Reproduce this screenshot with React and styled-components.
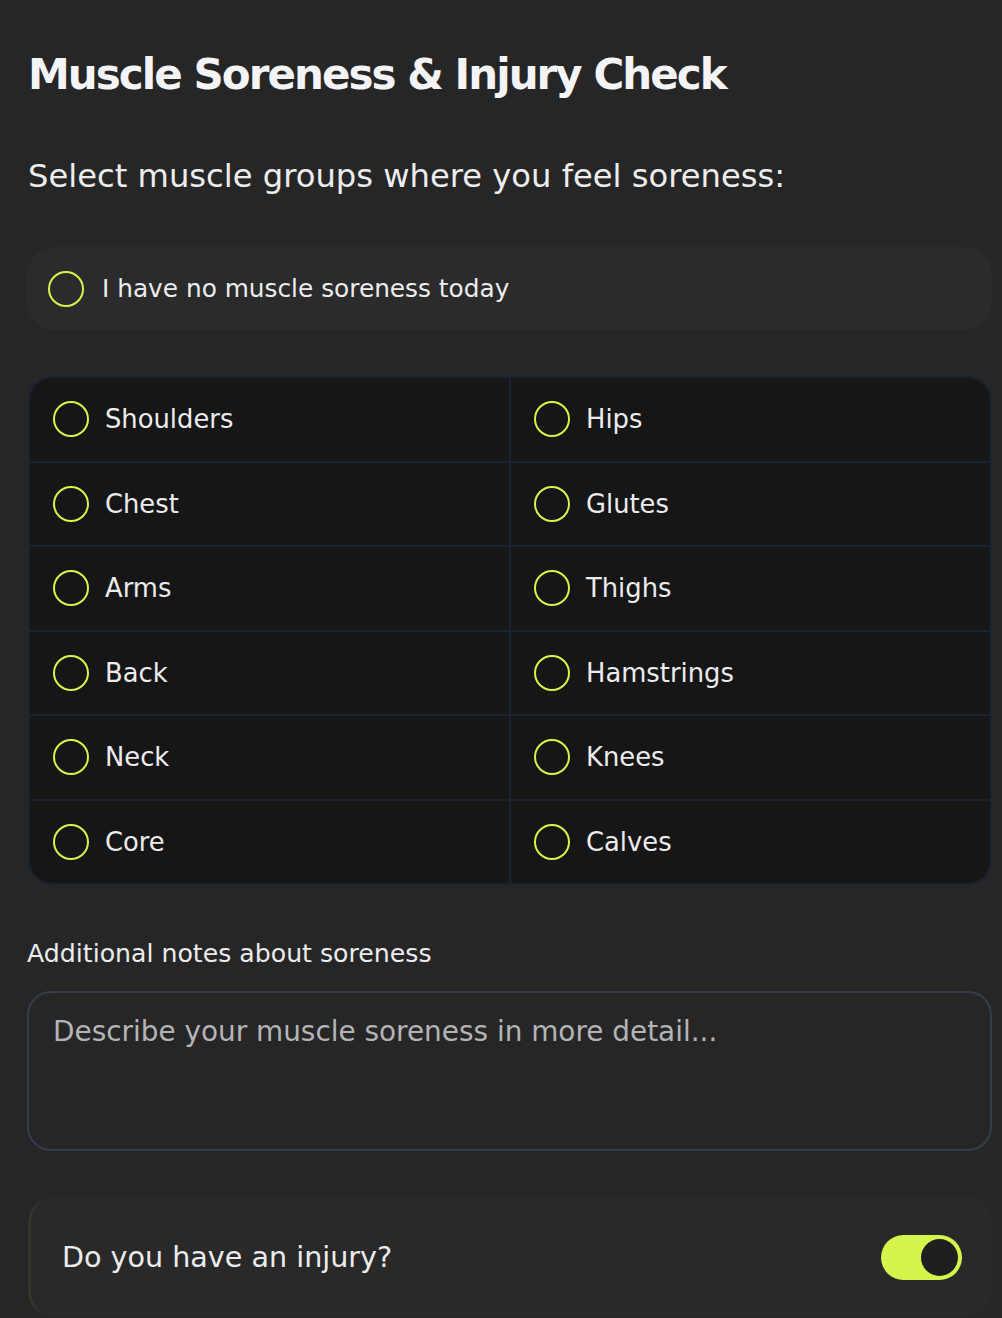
import React, { useState } from 'react'
import styled, { createGlobalStyle } from 'styled-components'

const GlobalStyle = createGlobalStyle`
  html, body {
    margin: 0;
    padding: 0;
    background: #262626;
  }
  body {
    font-family: "DejaVu Sans", "Noto Sans", sans-serif;
    color: #f2f2f4;
  }
`

const lime = '#d4f54c'

const Page = styled.div`
  display: flex;
  flex-direction: column;
  padding: 47px 10px 0 28px;
  min-height: 1318px;
  box-sizing: border-box;
  background: #262626;
`

const Title = styled.h1`
  margin: 0;
  font-size: 42px;
  line-height: 56px;
  font-weight: 700;
  letter-spacing: -1.95px;
  color: #f4f4f6;
`

const Subtitle = styled.h2`
  margin: 53px 0 0;
  font-size: 32.2px;
  line-height: 40px;
  font-weight: 400;
  color: #ededf0;
`

const Circle = styled.span`
  flex: none;
  width: 36px;
  height: 36px;
  box-sizing: border-box;
  border-radius: 50%;
  border: 2.5px solid ${lime};
  background: transparent;
`

const NoneCard = styled.label`
  margin: 51px 0 0 -1px;
  display: flex;
  align-items: center;
  gap: 18px;
  height: 83px;
  padding: 0 21px;
  border-radius: 28px;
  background: #2b2b2b;
  cursor: pointer;
`

const OptionText = styled.span`
  font-size: ${p => p.size || 24}px;
  color: #ececef;
`

const Grid = styled.div`
  margin-top: 46px;
  display: grid;
  grid-template-columns: 1fr 1fr;
  gap: 2px;
  background: #1c2330;
  border: 2px solid #1c2330;
  border-radius: 24px;
  overflow: hidden;
`

const Cell = styled.label`
  display: flex;
  align-items: center;
  gap: 16px;
  height: 82.5px;
  padding: 0 23px;
  background: #161616;
  cursor: pointer;
`

const FieldLabel = styled.label`
  margin: 53px 0 0 -1px;
  font-size: 25.2px;
  line-height: 32px;
  color: #ececef;
`

const Notes = styled.textarea`
  margin: 21px 0 0 -1px;
  height: 160px;
  box-sizing: border-box;
  padding: 21px 24px;
  resize: none;
  border: 2px solid #363e4c;
  border-radius: 24px;
  background: #262626;
  color: #ececef;
  font-family: inherit;
  font-size: 27.9px;
  line-height: 36px;
  outline: none;

  &::placeholder {
    color: #b4b4b6;
  }
`

const InjuryCard = styled.div`
  margin-top: 46px;
  display: flex;
  align-items: center;
  justify-content: space-between;
  height: 120px;
  box-sizing: border-box;
  padding: 0 30px 0 31px;
  border-left: 3px solid #35372c;
  border-radius: 26px;
  background: #292929;
`

const InjuryText = styled.span`
  font-size: 28.6px;
  color: #ececef;
`

const Track = styled.button`
  position: relative;
  width: 81px;
  height: 45px;
  padding: 0;
  border: none;
  border-radius: 23px;
  background: ${p => (p.on ? lime : '#3a3a3a')};
  cursor: pointer;
`

const Knob = styled.span`
  position: absolute;
  top: 4px;
  left: ${p => (p.on ? 40 : 4)}px;
  width: 37px;
  height: 37px;
  border-radius: 50%;
  background: #1f1f1f;
`

const muscles = [
  ['Shoulders', 'Hips'],
  ['Chest', 'Glutes'],
  ['Arms', 'Thighs'],
  ['Back', 'Hamstrings'],
  ['Neck', 'Knees'],
  ['Core', 'Calves']
]

export default function App() {
  const [injury, setInjury] = useState(true)

  return (
    <Page>
      <GlobalStyle />
      <Title>Muscle Soreness &amp; Injury Check</Title>
      <Subtitle>Select muscle groups where you feel soreness:</Subtitle>

      <NoneCard>
        <Circle />
        <OptionText size={24.8}>I have no muscle soreness today</OptionText>
      </NoneCard>

      <Grid>
        {muscles.flat().map(name => (
          <Cell key={name}>
            <Circle />
            <OptionText size={25.8}>{name}</OptionText>
          </Cell>
        ))}
      </Grid>

      <FieldLabel>Additional notes about soreness</FieldLabel>
      <Notes placeholder="Describe your muscle soreness in more detail..." />

      <InjuryCard>
        <InjuryText>Do you have an injury?</InjuryText>
        <Track on={injury ? 1 : 0} onClick={() => setInjury(!injury)}>
          <Knob on={injury ? 1 : 0} />
        </Track>
      </InjuryCard>
    </Page>
  )
}
